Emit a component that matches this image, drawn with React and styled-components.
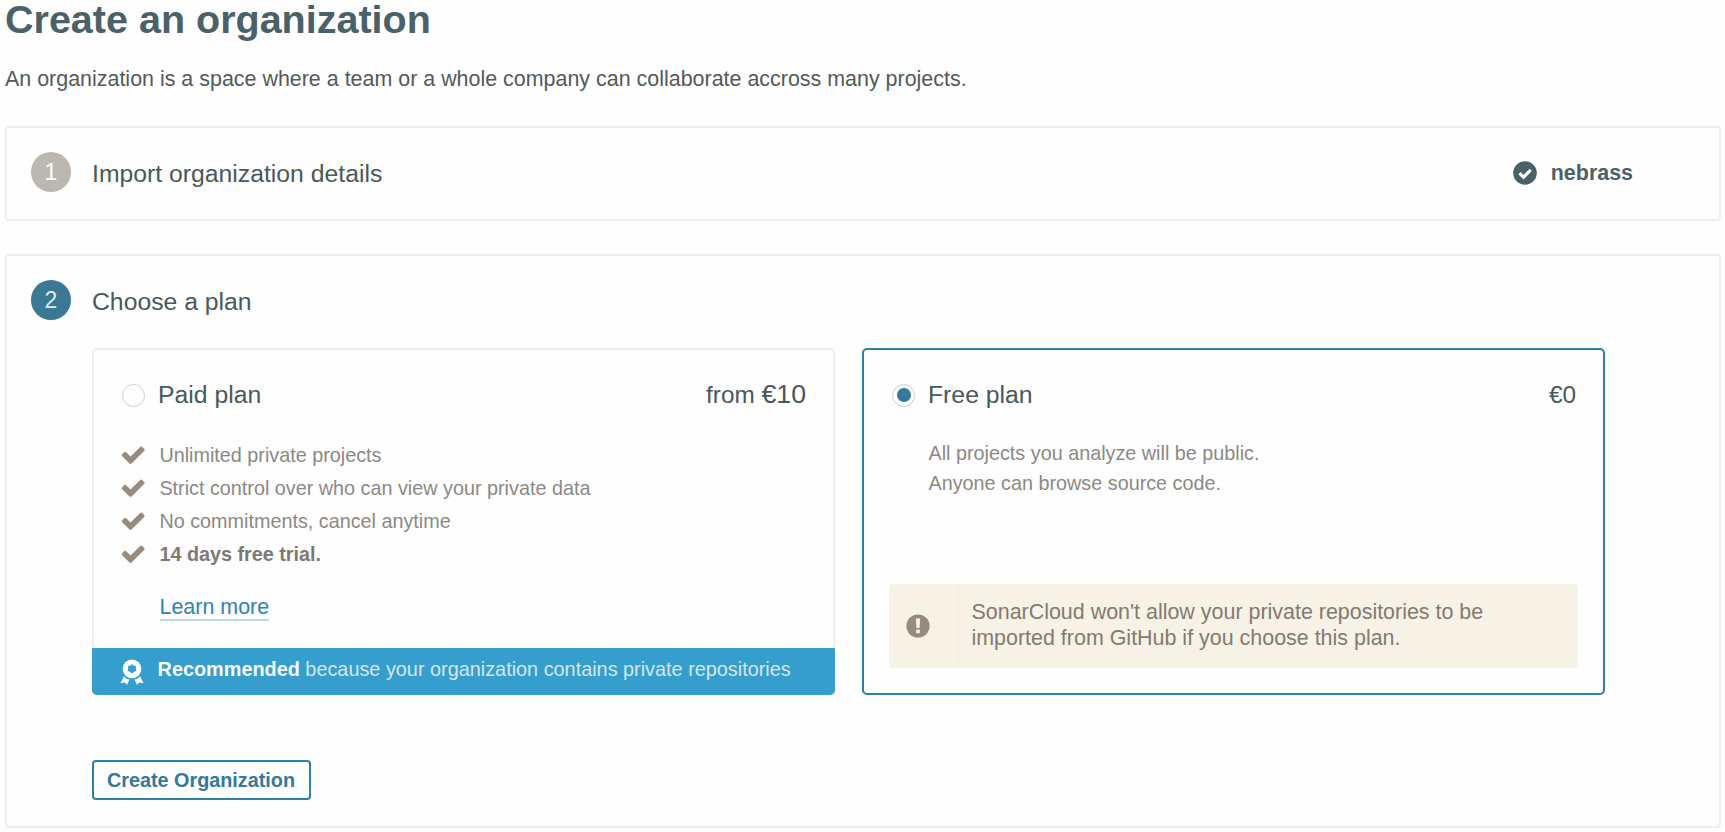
import React from 'react';
import styled, { createGlobalStyle } from 'styled-components';

const color = {
  title: '#4b6168',
  text: '#535a59',
  heading: '#49585b',
  muted: '#8b8985',
  mutedBold: '#7d7973',
  tan: '#978b80',
  line: '#f0eee7',
  primary: '#3a7893',
  active: '#2e7fa6',
  banner: '#369ecc',
  alert: '#f7f2e6',
};

const GlobalStyle = createGlobalStyle`
  *, *::before, *::after { box-sizing: border-box; }
  body {
    margin: 0;
    background: #fefefe;
    color: ${color.text};
    font-family: "Liberation Sans", Arial, sans-serif;
    font-size: 21.45px;
  }
  h1, h2, h3, p, ul { margin: 0; padding: 0; font-weight: 400; }
`;

const Page = styled.main`
  height: 832px;
  padding: 0 4px 0 5px;
`;

const PageTitle = styled.h1`
  color: ${color.title};
  font-size: 39.5px;
  font-weight: 700;
  line-height: 39px;
`;

const Lead = styled.p`
  margin: 27px 0 34px;
  line-height: 26px;
`;

const Step = styled.section`
  height: ${p => p.$height}px;
  padding-top: 24px;
  border: 2px solid ${color.line};
  border-radius: 4px;

  & + & { margin-top: 33px; }
`;

const StepHeader = styled.header`
  display: flex;
  align-items: center;
  height: 40px;
  padding: 0 86px 0 24px;
`;

const StepNumber = styled.span`
  width: 40px;
  height: 40px;
  margin-right: 21px;
  border-radius: 50%;
  background: ${p => (p.$active ? color.primary : '#bcb8b0')};
  color: ${p => (p.$active ? '#dcebf3' : '#fff')};
  font-size: 23px;
  line-height: 41px;
  text-align: center;
`;

const StepTitle = styled.h2`
  padding-top: 3px;
  color: ${color.heading};
  font-size: 24.75px;
  line-height: 28px;
`;

const StepResult = styled.div`
  display: flex;
  align-items: center;
  gap: 14px;
  margin-left: auto;
  padding-top: 2px;
  color: ${color.title};
  font-weight: 700;
  line-height: 26px;
`;

const StepBody = styled.div`
  padding: 28px 0 0 85px;
`;

const Plans = styled.div`
  display: grid;
  grid-template-columns: 743px 743px;
  gap: 27px;
  margin-bottom: 65px;
`;

const PlanCard = styled.article`
  display: flex;
  flex-direction: column;
  height: 347px;
  padding-top: 25px;
  border: 2px solid ${p => (p.$selected ? color.active : color.line)};
  border-radius: 5px;
`;

const PlanHeader = styled.header`
  display: flex;
  align-items: center;
  height: 40px;
  padding: 0 27px 0 28px;
  color: ${color.heading};
  font-size: 24.75px;
  line-height: 40px;
`;

const Radio = styled.span`
  display: grid;
  place-items: center;
  width: 23px;
  height: 23px;
  margin-right: 13px;
  border: 1px solid #c3d3da;
  border-radius: 50%;

  &::after {
    content: '';
    width: 14px;
    height: 14px;
    border-radius: 50%;
    background: ${p => (p.$checked ? '#33799a' : 'transparent')};
  }
`;

const PlanName = styled.h3`
  font-size: inherit;
`;

const Price = styled.span`
  margin-left: auto;
  font-size: 24.3px;
`;

const Amount = styled.span`
  font-size: 26.7px;
  line-height: 1;
`;

const Features = styled.ul`
  margin-top: 24px;
  padding-left: 26px;
  list-style: none;
`;

const Feature = styled.li`
  display: flex;
  align-items: center;
  gap: 13px;
  height: 33px;
  color: ${p => (p.$strong ? color.mutedBold : color.muted)};
  font-size: 19.8px;
  font-weight: ${p => (p.$strong ? 700 : 400)};
  line-height: 33px;
`;

const MoreLink = styled.a`
  align-self: flex-start;
  margin: 24px 0 0 65.5px;
  border-bottom: 2px solid #bfd8e6;
  color: #2f84ae;
  line-height: 24px;
  text-decoration: none;
`;

const Banner = styled.div`
  display: flex;
  align-items: center;
  gap: 13.6px;
  height: 47px;
  margin: auto -2px -2px;
  padding-left: 28px;
  border-radius: 0 0 5px 5px;
  background: ${color.banner};
  color: #d3e7f2;
  font-size: 19.85px;
  white-space: nowrap;

  p { padding-bottom: 4px; }
  strong { color: #f6fafc; }
`;

const Description = styled.p`
  margin-top: 24px;
  padding-left: 64.5px;
  color: ${color.muted};
  font-size: 19.8px;
  line-height: 29.7px;
`;

const Alert = styled.div`
  display: flex;
  height: 84px;
  margin: auto 25px 25px;
  border-radius: 4px;
  background: ${color.alert};
  color: #857a71;
`;

const AlertIcon = styled.div`
  display: flex;
  align-items: center;
  width: 65px;
  padding-left: 17px;
  border-right: 1px solid #faf7f0;
`;

const AlertText = styled.p`
  align-self: center;
  padding: 0 0 2px 17.5px;
  line-height: 26.4px;
`;

const SubmitButton = styled.button`
  display: block;
  width: 219px;
  height: 40px;
  padding: 0 1px 0 0;
  border: 2px solid ${color.active};
  border-radius: 4px;
  background: #fefefe;
  color: #33799b;
  font: 700 19.8px/36px "Liberation Sans", Arial, sans-serif;
`;

const CheckIcon = () => (
  <svg width="26.4" height="26.4" viewBox="0 0 16 16" fill={color.tan}>
    <path d="M14.92 4.804q0 0.357-0.25 0.607l-7.679 7.679q-0.25 0.25-0.607 0.25t-0.607-0.25l-4.446-4.446q-0.25-0.25-0.25-0.607t0.25-0.607l1.214-1.214q0.25-0.25 0.607-0.25t0.607 0.25l2.625 2.634 5.857-5.866q0.25-0.25 0.607-0.25t0.607 0.25l1.214 1.214q0.25 0.25 0.25 0.607z" />
  </svg>
);

const DoneIcon = () => (
  <svg width="24" height="24" viewBox="0 0 24 24">
    <circle cx="12" cy="12" r="11.8" fill={color.title} />
    <path d="M6.5 12.2l4 4 7.200-7.300" fill="none" stroke="#fff" strokeWidth="3.2" />
  </svg>
);

const WarningIcon = () => (
  <svg width="24" height="24" viewBox="0 0 24 24">
    <circle cx="12" cy="12" r="11.6" fill={color.tan} />
    <path d="M9.9 4.6h4.2l-.5 9.4h-3.2z" fill={color.alert} />
    <rect x="10.1" y="15.6" width="3.8" height="3.6" rx="0.6" fill={color.alert} />
  </svg>
);

const BadgeIcon = () => (
  <svg width="24" height="26" viewBox="0 0 24 26" fill="#fafdfe">
    <circle cx="12" cy="9.800" r="9.400" />
    <path d="M12 5l1.600 1.700 2.500.4-.4 2.500.8 2.200-2.300 1L12 14.500l-2.200-1.700-2.300-1 .8-2.200-.4-2.500 2.500-.4z" fill={color.banner} />
    <path d="M4 17.300c1.400 1.900 3.300 3 5.600 3.300L7 25.800l-2.300-2.200-4.300.6zM20 17.300c-1.400 1.900-3.300 3-5.600 3.300l2.600 5.200 2.300-2.200 4.300.6z" />
  </svg>
);

const features = [
  { label: 'Unlimited private projects' },
  { label: 'Strict control over who can view your private data' },
  { label: 'No commitments, cancel anytime' },
  { label: '14 days free trial.', strong: true },
];

export default function App() {
  return (
    <Page>
      <GlobalStyle />
      <PageTitle>Create an organization</PageTitle>
      <Lead>An organization is a space where a team or a whole company can collaborate accross many projects.</Lead>

      <Step $height={95}>
        <StepHeader>
          <StepNumber>1</StepNumber>
          <StepTitle>Import organization details</StepTitle>
          <StepResult><DoneIcon />nebrass</StepResult>
        </StepHeader>
      </Step>

      <Step $height={574}>
        <StepHeader>
          <StepNumber $active>2</StepNumber>
          <StepTitle>Choose a plan</StepTitle>
        </StepHeader>
        <StepBody>
          <Plans>
            <PlanCard>
              <PlanHeader>
                <Radio />
                <PlanName>Paid plan</PlanName>
                <Price>from <Amount>€10</Amount></Price>
              </PlanHeader>
              <Features>
                {features.map(f => (
                  <Feature key={f.label} $strong={f.strong}><CheckIcon />{f.label}</Feature>
                ))}
              </Features>
              <MoreLink>Learn more</MoreLink>
              <Banner>
                <BadgeIcon />
                <p><strong>Recommended</strong> because your organization contains private repositories</p>
              </Banner>
            </PlanCard>

            <PlanCard $selected>
              <PlanHeader>
                <Radio $checked />
                <PlanName>Free plan</PlanName>
                <Price>€0</Price>
              </PlanHeader>
              <Description>
                All projects you analyze will be public.<br />
                Anyone can browse source code.
              </Description>
              <Alert>
                <AlertIcon><WarningIcon /></AlertIcon>
                <AlertText>
                  SonarCloud won't allow your private repositories to be<br />
                  imported from GitHub if you choose this plan.
                </AlertText>
              </Alert>
            </PlanCard>
          </Plans>
          <SubmitButton>Create Organization</SubmitButton>
        </StepBody>
      </Step>
    </Page>
  );
}
